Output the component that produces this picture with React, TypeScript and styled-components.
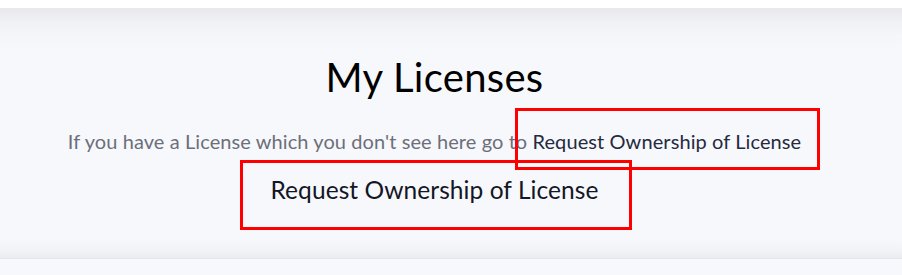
import React from "react";
import styled, { createGlobalStyle } from "styled-components";

const Global = createGlobalStyle`
  html, body { margin: 0; padding: 0; background: #ffffff; }
  body { font-family: "Lato", "Open Sans", sans-serif; }
`;

const Page = styled.div`
  position: relative;
  width: 902px;
  height: 275px;
  padding-top: 8px;
  box-sizing: border-box;
  background: #ffffff;
  overflow: hidden;
`;

const Hero = styled.section`
  height: 250px;
  padding-right: 33px;
  display: flex;
  flex-direction: column;
  align-items: center;
  background:
    linear-gradient(to bottom, #e7e7ec 0px, #f0f1f5 14px, #f5f6fa 28px, rgba(247, 248, 252, 0) 44px),
    linear-gradient(to top, #ebebf0 0px, #f3f4f8 9px, rgba(247, 248, 252, 0) 20px),
    #f7f8fc;
  border-bottom: 1px solid #e4e5ee;
`;

const Below = styled.div`
  height: 20px;
  background: #f7f8fc;
`;

const Title = styled.h1`
  margin: 46px 0 0;
  font-size: 40px;
  line-height: 46px;
  font-weight: 400;
  letter-spacing: 0.3px;
  color: #000000;
`;

const Subtitle = styled.p`
  margin: 29px 0 0;
  font-size: 20px;
  line-height: 24px;
  letter-spacing: 0.09px;
  color: #6c6f7a;
`;

const InlineLink = styled.span`
  color: #252a3d;
`;

const RequestButton = styled.button`
  margin-top: 22px;
  padding: 0;
  border: none;
  background: transparent;
  font-family: inherit;
  font-size: 24.5px;
  line-height: 30px;
  letter-spacing: 0.07px;
  color: #141625;
  cursor: pointer;
`;

const Highlight = styled.div<{ $x: number; $y: number; $w: number; $h: number }>`
  position: absolute;
  left: ${(p) => p.$x}px;
  top: ${(p) => p.$y}px;
  width: ${(p) => p.$w}px;
  height: ${(p) => p.$h}px;
  border: 3px solid #ff0000;
  box-sizing: border-box;
  pointer-events: none;
`;

export default function App() {
  return (
    <>
      <Global />
      <Page>
        <Hero>
          <Title>My Licenses</Title>
          <Subtitle>
            If you have a License which you don't see here go to{" "}
            <InlineLink>Request Ownership of License</InlineLink>
          </Subtitle>
          <RequestButton>Request Ownership of License</RequestButton>
        </Hero>
        <Below />
        <Highlight $x={515} $y={108} $w={305} $h={62} />
        <Highlight $x={240} $y={160} $w={392} $h={70} />
      </Page>
    </>
  );
}
